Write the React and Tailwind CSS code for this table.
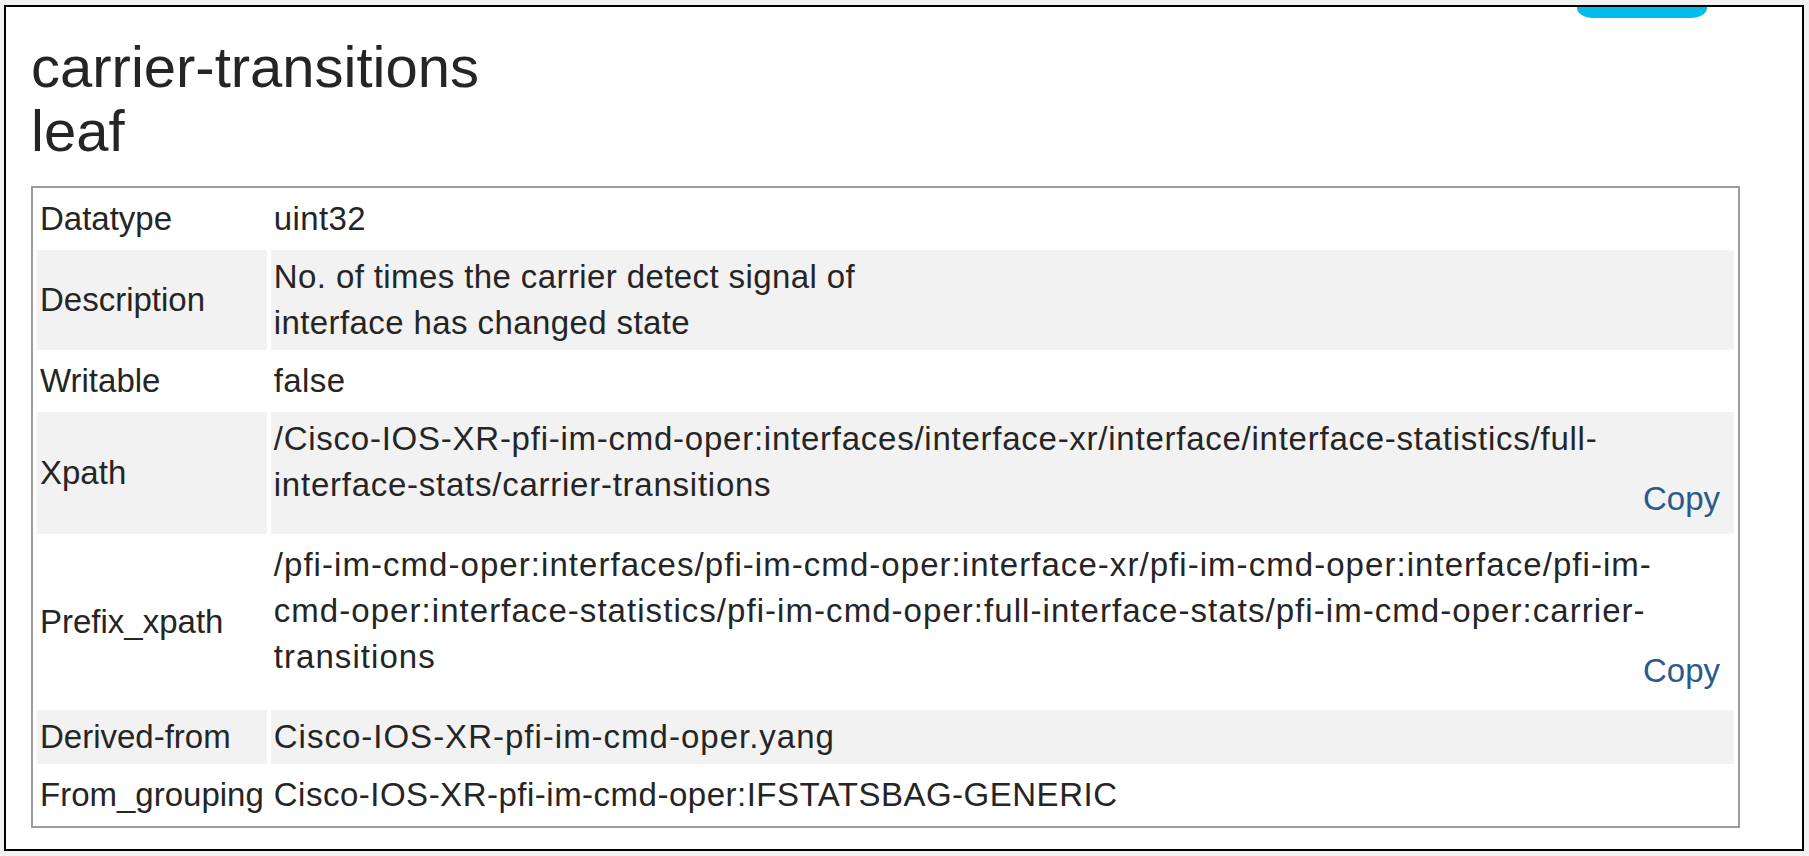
const rows = [
  { label: "Datatype", value: "uint32", track: "tracking-[0.4px]" },
  {
    label: "Description",
    value: (
      <>
        No. of times the carrier detect signal of
        <br />
        interface has changed state
      </>
    ),
    track: "tracking-[0.4px]",
  },
  { label: "Writable", value: "false", track: "tracking-[0.4px]" },
  {
    label: "Xpath",
    value:
      "/Cisco-IOS-XR-pfi-im-cmd-oper:interfaces/interface-xr/interface/interface-statistics/full-interface-stats/carrier-transitions",
    copy: true,
    track: "tracking-[0.75px]",
  },
  {
    label: "Prefix_xpath",
    value:
      "/pfi-im-cmd-oper:interfaces/pfi-im-cmd-oper:interface-xr/pfi-im-cmd-oper:interface/pfi-im-cmd-oper:interface-statistics/pfi-im-cmd-oper:full-interface-stats/pfi-im-cmd-oper:carrier-transitions",
    copy: true,
    track: "tracking-[1.05px]",
  },
  {
    label: "Derived-from",
    value: "Cisco-IOS-XR-pfi-im-cmd-oper.yang",
    track: "tracking-[1px]",
  },
  {
    label: "From_grouping",
    value: "Cisco-IOS-XR-pfi-im-cmd-oper:IFSTATSBAG-GENERIC",
    track: "tracking-[0.5px]",
  },
];

const App = () => {
  return (
    <div className="min-h-[856px] w-full bg-[#f2f2f2] pt-[5px] pl-[4px] font-['Liberation_Sans',Arial,sans-serif] text-[#252525]">
      <div className="w-[1800px] h-[846px] border-2 border-black bg-white pl-[25px]">
        {/* cut-off pill button at the top */}
        <div className="flex justify-end pr-[95px]">
          <div className="w-[130px] h-[11px] bg-[#00bceb] rounded-bl-[16px_10px] rounded-br-[16px_10px]" />
        </div>

        <h1 className="mt-[17px] text-[58px] leading-[64px] font-normal">
          carrier-transitions
          <br />
          leaf
        </h1>

        <table className="mt-[23px] w-[1709px] border-2 border-[#9c9c9c] border-separate border-spacing-[4px] text-[33px] leading-[46px]">
          <tbody>
            {rows.map((r, i) => (
              <tr key={r.label} className={i % 2 === 1 ? "bg-[#f2f2f2]" : "bg-white"}>
                <td className="px-[3px] py-1 align-middle whitespace-nowrap">
                  {r.label}
                </td>
                <td className={`w-full pl-[3px] pr-[14px] py-1 align-top ${r.track}`}>
                  <div>{r.value}</div>
                  {r.copy && (
                    <div className="-mt-[32px] mb-[8px] text-right tracking-normal text-[#2a5a8c]">
                      Copy
                    </div>
                  )}
                </td>
              </tr>
            ))}
          </tbody>
        </table>
      </div>
    </div>
  );
};

export default App;
